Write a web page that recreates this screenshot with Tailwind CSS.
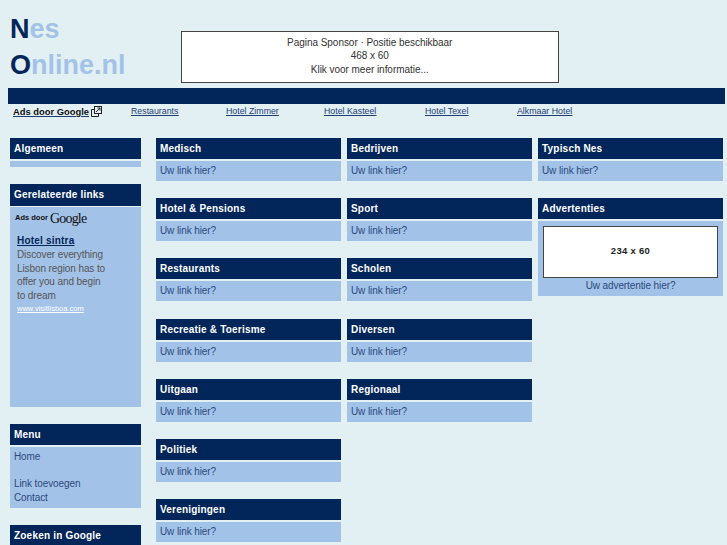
<!DOCTYPE html>
<html lang="nl">
<head>
    <meta charset="UTF-8">
    <title>NesOnline.nl</title>
    <script src="https://cdn.jsdelivr.net/npm/@tailwindcss/browser@4"></script>
</head>
<body class="bg-[#e2f0f3] h-[545px] overflow-hidden font-['Liberation_Sans',Arial,sans-serif] text-[11px] text-[#444]">

    <!-- header -->
    <div class="flex h-[88px] pl-[10px]">
        <div class="w-[170.5px] pt-[11px] text-[27px] leading-[36px] font-bold text-[#a3c2e8]">
            <div><span class="text-[#03265a]">N</span>es</div>
            <div><span class="text-[#03265a]">O</span>nline.nl</div>
        </div>
        <div class="mt-[31px] w-[378.5px] h-[52px] bg-white border border-[#444] text-center text-[#333] text-[10px] tracking-[-0.04px] leading-[13.7px] pt-[4px]">
            <div>Pagina Sponsor · Positie beschikbaar</div>
            <div class="-mt-[0.5px]">468 x 60</div>
            <div>Klik voor meer informatie...</div>
        </div>
    </div>
    <div class="ml-[8px] w-[717px] h-[16px] bg-[#03265a]"></div>

    <!-- ads row -->
    <div class="flex items-center h-[16px] text-[8.8px] text-[#1d3d72] underline">
        <div class="w-[131px] pl-[13px] flex items-center gap-[2px]">
            <span class="font-bold text-[9.4px] text-[#111]">Ads door Google</span>
            <svg width="11" height="11" viewBox="0 0 11 11" fill="none" stroke="#222" stroke-width="1"><rect x="3.5" y="0.5" width="7" height="7" /><path d="M3.5 3.5H0.5V10.5H7.5V7.5M5 6L9 2M6.5 2H9V4.5" /></svg>
        </div>
        <a class="w-[95px]">Restaurants</a>
        <a class="w-[98px]">Hotel Zimmer</a>
        <a class="w-[101px]">Hotel Kasteel</a>
        <a class="w-[92px]">Hotel Texel</a>
        <a>Alkmaar Hotel</a>
    </div>

    <!-- columns -->
    <div class="flex mt-[18px] pl-[10px] items-start">
        <div class="w-[131px] mr-[15px] flex flex-col gap-[17px]">
            <div>
                <div class="h-[21px] bg-[#03265a] text-white font-bold text-[10px] tracking-[0.2px] leading-[21px] pl-[4px] mb-[2px]">Algemeen</div>
                <div class="h-[6px] bg-[#a3c2e8]"></div>
            </div>
            <div>
                <div class="h-[22px] bg-[#03265a] text-white font-bold text-[10px] tracking-[0.2px] leading-[21px] pl-[4px] mb-[1px]">Gerelateerde links</div>
                <div class="h-[199.5px] bg-[#a3c2e8] pt-[3px]">
                    <div class="flex items-center pl-[5px] h-[16px] text-[#111] text-[7.5px] font-bold">Ads door <span class="ml-[2px] font-['Liberation_Serif',serif] font-normal text-[14px] tracking-[-0.8px]">Google</span></div>
                    <div class="pl-[7px] pt-[8px]">
                        <a class="block font-bold text-[10px] leading-[14px] tracking-[0.2px] text-[#03265a] underline">Hotel sintra</a>
                        <div class="text-[10px] tracking-[-0.1px] leading-[13.7px] text-[#555]">Discover everything<br>Lisbon region has to<br>offer you and begin<br>to dream</div>
                        <a class="block text-[7.5px] leading-[12px] text-white underline">www.visitlisboa.com</a>
                    </div>
                </div>
            </div>
            <div>
                <div class="h-[21px] bg-[#03265a] text-white font-bold text-[10px] tracking-[0.2px] leading-[21px] pl-[4px] mb-[2px]">Menu</div>
                <div class="h-[61px] bg-[#a3c2e8] pl-[4px] pt-[3px] text-[10px] tracking-[-0.1px] leading-[13.7px] text-[#2b4a7d]">
                    <div>Home</div>
                    <div class="h-[13.7px]"></div>
                    <div>Link toevoegen</div>
                    <div>Contact</div>
                </div>
            </div>
            <div>
                <div class="h-[21px] bg-[#03265a] text-white font-bold text-[10px] tracking-[0.2px] leading-[21px] pl-[4px]">Zoeken in Google</div>
            </div>
        </div>

        <div class="w-[185px] mr-[6px] flex flex-col gap-[17.2px]">
            <div><div class="h-[21px] bg-[#03265a] text-white font-bold text-[10px] tracking-[0.2px] leading-[21px] pl-[4px] mb-[2px]">Medisch</div><div class="h-[20px] bg-[#a3c2e8] pl-[4px] text-[10px] tracking-[-0.1px] leading-[20px] text-[#2b4a7d]">Uw link hier?</div></div>
            <div><div class="h-[21px] bg-[#03265a] text-white font-bold text-[10px] tracking-[0.2px] leading-[21px] pl-[4px] mb-[2px]">Hotel &amp; Pensions</div><div class="h-[20px] bg-[#a3c2e8] pl-[4px] text-[10px] tracking-[-0.1px] leading-[20px] text-[#2b4a7d]">Uw link hier?</div></div>
            <div><div class="h-[21px] bg-[#03265a] text-white font-bold text-[10px] tracking-[0.2px] leading-[21px] pl-[4px] mb-[2px]">Restaurants</div><div class="h-[20px] bg-[#a3c2e8] pl-[4px] text-[10px] tracking-[-0.1px] leading-[20px] text-[#2b4a7d]">Uw link hier?</div></div>
            <div><div class="h-[21px] bg-[#03265a] text-white font-bold text-[10px] tracking-[0.2px] leading-[21px] pl-[4px] mb-[2px]">Recreatie &amp; Toerisme</div><div class="h-[20px] bg-[#a3c2e8] pl-[4px] text-[10px] tracking-[-0.1px] leading-[20px] text-[#2b4a7d]">Uw link hier?</div></div>
            <div><div class="h-[21px] bg-[#03265a] text-white font-bold text-[10px] tracking-[0.2px] leading-[21px] pl-[4px] mb-[2px]">Uitgaan</div><div class="h-[20px] bg-[#a3c2e8] pl-[4px] text-[10px] tracking-[-0.1px] leading-[20px] text-[#2b4a7d]">Uw link hier?</div></div>
            <div><div class="h-[21px] bg-[#03265a] text-white font-bold text-[10px] tracking-[0.2px] leading-[21px] pl-[4px] mb-[2px]">Politiek</div><div class="h-[20px] bg-[#a3c2e8] pl-[4px] text-[10px] tracking-[-0.1px] leading-[20px] text-[#2b4a7d]">Uw link hier?</div></div>
            <div><div class="h-[21px] bg-[#03265a] text-white font-bold text-[10px] tracking-[0.2px] leading-[21px] pl-[4px] mb-[2px]">Verenigingen</div><div class="h-[20px] bg-[#a3c2e8] pl-[4px] text-[10px] tracking-[-0.1px] leading-[20px] text-[#2b4a7d]">Uw link hier?</div></div>
        </div>

        <div class="w-[185px] mr-[6px] flex flex-col gap-[17.2px]">
            <div><div class="h-[21px] bg-[#03265a] text-white font-bold text-[10px] tracking-[0.2px] leading-[21px] pl-[4px] mb-[2px]">Bedrijven</div><div class="h-[20px] bg-[#a3c2e8] pl-[4px] text-[10px] tracking-[-0.1px] leading-[20px] text-[#2b4a7d]">Uw link hier?</div></div>
            <div><div class="h-[21px] bg-[#03265a] text-white font-bold text-[10px] tracking-[0.2px] leading-[21px] pl-[4px] mb-[2px]">Sport</div><div class="h-[20px] bg-[#a3c2e8] pl-[4px] text-[10px] tracking-[-0.1px] leading-[20px] text-[#2b4a7d]">Uw link hier?</div></div>
            <div><div class="h-[21px] bg-[#03265a] text-white font-bold text-[10px] tracking-[0.2px] leading-[21px] pl-[4px] mb-[2px]">Scholen</div><div class="h-[20px] bg-[#a3c2e8] pl-[4px] text-[10px] tracking-[-0.1px] leading-[20px] text-[#2b4a7d]">Uw link hier?</div></div>
            <div><div class="h-[21px] bg-[#03265a] text-white font-bold text-[10px] tracking-[0.2px] leading-[21px] pl-[4px] mb-[2px]">Diversen</div><div class="h-[20px] bg-[#a3c2e8] pl-[4px] text-[10px] tracking-[-0.1px] leading-[20px] text-[#2b4a7d]">Uw link hier?</div></div>
            <div><div class="h-[21px] bg-[#03265a] text-white font-bold text-[10px] tracking-[0.2px] leading-[21px] pl-[4px] mb-[2px]">Regionaal</div><div class="h-[20px] bg-[#a3c2e8] pl-[4px] text-[10px] tracking-[-0.1px] leading-[20px] text-[#2b4a7d]">Uw link hier?</div></div>
        </div>

        <div class="w-[185px] flex flex-col gap-[17.2px]">
            <div><div class="h-[21px] bg-[#03265a] text-white font-bold text-[10px] tracking-[0.2px] leading-[21px] pl-[4px] mb-[2px]">Typisch Nes</div><div class="h-[20px] bg-[#a3c2e8] pl-[4px] text-[10px] tracking-[-0.1px] leading-[20px] text-[#2b4a7d]">Uw link hier?</div></div>
            <div>
                <div class="h-[21px] bg-[#03265a] text-white font-bold text-[10px] tracking-[0.2px] leading-[21px] pl-[4px] mb-[2px]">Advertenties</div>
                <div class="h-[75px] bg-[#a3c2e8] pt-[5px] text-center">
                    <div class="mx-auto w-[175px] h-[52px] bg-white border border-[#444] text-[#222] font-bold text-[9.5px] tracking-[0.3px] leading-[48px]">234 x 60</div>
                    <div class="text-[10px] tracking-[-0.1px] leading-[16px] text-[#2b4a7d]">Uw advertentie hier?</div>
                </div>
            </div>
        </div>
    </div>

</body>
</html>
